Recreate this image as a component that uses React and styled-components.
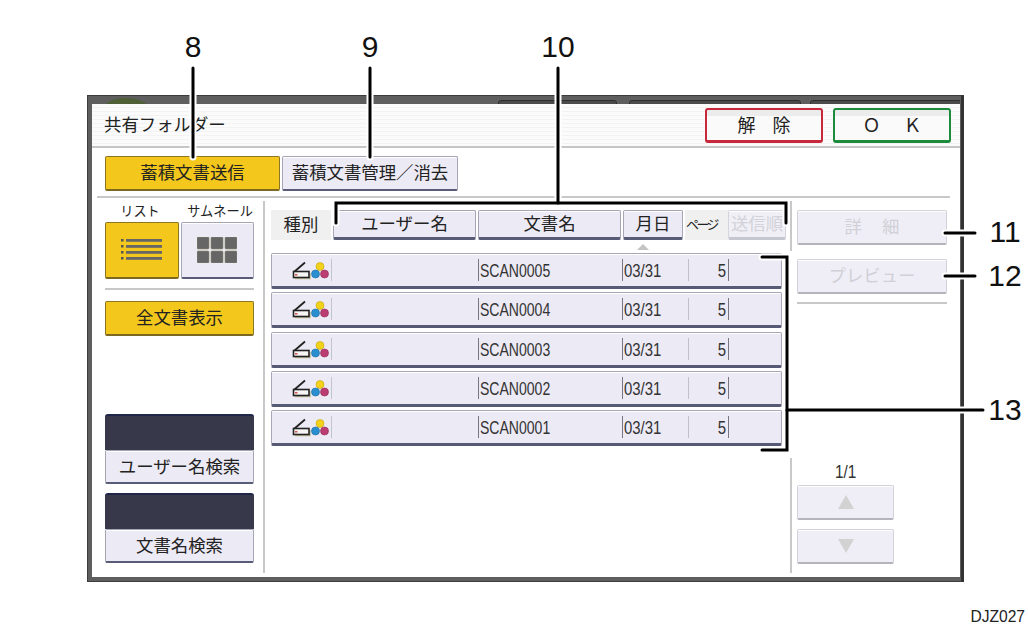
import React from "react";
import styled, { createGlobalStyle, css } from "styled-components";

const Global = createGlobalStyle`
  html, body { margin: 0; padding: 0; background: #fff; }
  body { font-family: "Noto Sans CJK JP", "Liberation Sans", sans-serif; color: #222; }
  #root { width: 1028px; height: 629px; overflow: hidden; }
`;

const Page = styled.div`
  position: relative;
  width: 1028px;
  height: 629px;
  padding: 95px 64px 0 87px;
  box-sizing: border-box;
`;

const Frame = styled.div`
  width: 877px;
  height: 487px;
  box-sizing: border-box;
  background: #5e5e5e;
  border: 1px solid #3c3c3c;
  border-right: 3px solid #333;
  padding: 0 1px 4px 4px;
  display: flex;
  flex-direction: column;
`;

const Strip = styled.div`
  height: 8px;
  display: flex;
  overflow: hidden;
  position: relative;
  flex: none;
`;

const Orb = styled.div`
  width: 44px;
  height: 20px;
  margin: 2px 0 0 12px;
  border-radius: 50%;
  background: #4f5f36;
  flex: none;
`;

const StripTab = styled.div`
  width: ${(p) => p.$w}px;
  margin-left: ${(p) => p.$m}px;
  margin-top: 4px;
  height: 10px;
  flex: none;
  background: #4a4a4a;
  border: 1px solid #2e2e2e;
  border-radius: 3px 3px 0 0;
`;

const Panel = styled.div`
  flex: 1;
  background: #fff;
  border-radius: 4px 0 0 0;
  display: flex;
  flex-direction: column;
  min-height: 0;
`;

const TitleBar = styled.div`
  height: 44px;
  flex: none;
  box-sizing: border-box;
  display: flex;
  align-items: center;
  gap: 10px;
  padding: 0 9px 0 12px;
  background: repeating-linear-gradient(#fbfbfb 0 3px, #f3f3f3 3px 4px);
  border-bottom: 2px solid #c6c6c6;
`;

const Title = styled.div`
  flex: 1;
  font-size: 17.4px;
  line-height: 24px;
  margin-top: -2px;
`;

const ConfirmButton = styled.div`
  width: 118px;
  height: 35px;
  box-sizing: border-box;
  display: flex;
  align-items: center;
  justify-content: center;
  gap: ${(p) => p.$gap}px;
  font-size: 18px;
  padding-bottom: 1px;
  background: linear-gradient(#ececec 0 20%, #fafafa 20% 100%);
  border: 2px solid ${(p) => p.$tone};
  border-bottom-width: 3px;
  border-radius: 3px;
`;

const buttonBase = css`
  box-sizing: border-box;
  display: flex;
  align-items: center;
  justify-content: center;
  padding-bottom: 3px;
  border-radius: 2px;
  background: ${(p) => (p.$on ? "#f3c71b" : "#eceaf5")};
  border: 1px solid ${(p) => (p.$on ? "#8c7624" : "#a5a5b6")};
  border-bottom: 2px solid ${(p) => (p.$on ? "#7c6820" : "#595c77")};
  box-shadow: inset 0 1px 0 ${(p) => (p.$on ? "#f3c71b" : "#fff")};
`;

const TabRow = styled.div`
  display: flex;
  gap: 2px;
  margin-top: 8px;
  padding-left: 13px;
  flex: none;
`;

const TabButton = styled.div`
  ${buttonBase};
  width: ${(p) => p.$w}px;
  height: 35px;
  font-size: 17.4px;
`;

const HRule = styled.div`
  height: 2px;
  background: #c8c8c8;
  margin: ${(p) => p.$m || "0"};
  flex: none;
`;

const Body = styled.div`
  flex: 1;
  display: flex;
  min-height: 0;
`;

const LeftCol = styled.div`
  width: 149px;
  margin-left: 13px;
  flex: none;
  display: flex;
  flex-direction: column;
`;

const ViewLabels = styled.div`
  display: grid;
  grid-template-columns: 70px 90px;
  margin-top: 5px;
  height: 19px;
  font-size: 13.2px;
  line-height: 16px;
  text-align: center;
`;

const ViewButtons = styled.div`
  display: flex;
  gap: 2px;
`;

const ViewButton = styled.div`
  ${buttonBase};
  width: 74px;
  height: 57px;
  padding-bottom: 0;
`;

const ShowAll = styled.div`
  ${buttonBase};
  height: 35px;
  font-size: 17.4px;
  margin-top: 11px;
`;

const SearchGroup = styled.div`
  display: flex;
  flex-direction: column;
  margin-top: ${(p) => p.$m}px;
`;

const SearchField = styled.div`
  height: 36px;
  box-sizing: border-box;
  background: #373849;
  border-top: 2px solid #20264a;
  border-radius: 3px 3px 0 0;
`;

const SearchButton = styled.div`
  ${buttonBase};
  height: 34px;
  font-size: 17.4px;
`;

const VRule = styled.div`
  width: 2px;
  background: #c8c8c8;
  margin: ${(p) => p.$m};
  height: ${(p) => p.$h || "auto"};
  flex: none;
`;

const Center = styled.div`
  width: 514px;
  flex: none;
  margin-left: 6px;
  padding-top: 12px;
  box-sizing: border-box;
`;

const HeaderRow = styled.div`
  display: flex;
  height: 30px;
  gap: 2px;
`;

const HeadCell = styled.div`
  ${buttonBase};
  width: ${(p) => p.$w}px;
  height: 30px;
  font-size: 17.4px;
  flex: none;
  border-bottom-width: 3px;
`;

const HeadLabel = styled.div`
  width: ${(p) => p.$w}px;
  height: 30px;
  flex: none;
  box-sizing: border-box;
  padding: 0 ${(p) => p.$pr || 0}px 3px 0;
  background: #f0f0f0;
  display: flex;
  align-items: center;
  justify-content: center;
  font-size: ${(p) => p.$size}px;
  letter-spacing: ${(p) => p.$track || 0}px;
`;

const DisabledHead = styled(HeadCell)`
  color: #d2d2d8;
  background: #f0eff6;
  border-color: #d4d4dc;
  border-bottom-color: #c6c6d0;
  margin-left: -2px;
`;

const SortMark = styled.div`
  width: 0;
  height: 0;
  margin: 4px 0 3px 366px;
  border-left: 6px solid transparent;
  border-right: 6px solid transparent;
  border-bottom: 6px solid #c4c4c4;
`;

const List = styled.div`
  display: flex;
  flex-direction: column;
  gap: 3.25px;
  width: 511px;
`;

const Row = styled.div`
  height: 36px;
  box-sizing: border-box;
  display: grid;
  grid-template-columns: 60px 146px 144px 66px 41px 1fr;
  align-items: center;
  background: #eceaf5;
  border: 1px solid #a7a7b7;
  border-bottom: 3px solid #565a74;
  border-radius: 2px;
  box-shadow: inset 0 1px 0 #fff;
`;

const IconCell = styled.div`
  height: 22px;
  display: flex;
  align-items: center;
  padding-left: 20px;
  box-sizing: border-box;
  border-right: 1px solid #c4c4cc;
`;

const Cell = styled.div`
  height: 22px;
  line-height: 24px;
  box-sizing: border-box;
  border-left: 1px solid ${(p) => (p.$soft ? "#c0c0c8" : "#77777f")};
  padding-left: 1px;
  font-family: "Liberation Sans", sans-serif;
  font-size: 18px;
  color: #333;
  white-space: nowrap;
`;

const Narrow = styled.span`
  display: inline-block;
  transform: scaleX(${(p) => p.$sx});
  transform-origin: ${(p) => p.$origin || "left"} center;
`;

const PageCount = styled(Cell)`
  text-align: right;
  padding-right: 2px;
  border-right: 1px solid #77777f;
`;

const RightCol = styled.div`
  flex: 1;
  display: flex;
  margin-left: 5px;
  min-width: 0;
`;

const Rules = styled.div`
  width: 2px;
  display: flex;
  flex-direction: column;
  justify-content: space-between;
  flex: none;
`;

const RightContent = styled.div`
  width: 150px;
  margin-left: 5px;
  display: flex;
  flex-direction: column;
`;

const ActionButton = styled.div`
  ${buttonBase};
  height: 35px;
  margin-top: ${(p) => p.$m}px;
  font-size: 17.4px;
  gap: ${(p) => p.$gap || 0}px;
  color: #d0d0d6;
  background: #efeef6;
  border-color: #d2d2da;
  border-bottom-color: #b4b4bd;
`;

const Pager = styled.div`
  margin-top: auto;
  padding-bottom: 13px;
  width: 97px;
  display: flex;
  flex-direction: column;
`;

const PagerText = styled.div`
  text-align: center;
  font-family: "Liberation Sans", sans-serif;
  font-size: 18px;
  line-height: 20px;
  margin-bottom: 3px;
  color: #333;
`;

const PagerButton = styled(ActionButton)`
  width: 97px;
  padding-bottom: 0;
  margin-top: ${(p) => p.$m}px;
`;

const Overlay = styled.svg`
  position: absolute;
  left: 0;
  top: 0;
  width: 1028px;
  height: 629px;
  pointer-events: none;
`;

const Callout = styled.div`
  position: absolute;
  transform: translate(-50%, -50%);
  left: ${(p) => p.$x}px;
  top: ${(p) => p.$y}px;
  font-family: "Liberation Sans", sans-serif;
  font-size: 30px;
  line-height: 1;
  color: #111;
`;

const FigureCode = styled.div`
  position: absolute;
  right: 3px;
  top: 609px;
  font-family: "Liberation Sans", sans-serif;
  font-size: 15.6px;
  line-height: 16px;
  color: #222;
`;

const ScanIcon = () => (
  <svg width="38" height="20" viewBox="0 0 38 20" aria-hidden="true">
    <path d="M2 12 L13 2.5" stroke="#222" strokeWidth="1.8" fill="none" />
    <path d="M3 18.7 H18.2 V13" stroke="#c2c29a" strokeWidth="1.3" fill="none" />
    <rect x="1.5" y="11.5" width="15.5" height="6" fill="#f6f6f6" stroke="#222" strokeWidth="1.6" />
    <rect x="3" y="14" width="2.5" height="1.5" fill="#d9534f" />
    <circle cx="28" cy="6.5" r="4" fill="#f2d21b" stroke="#c5a410" strokeWidth=".6" />
    <circle cx="23.5" cy="14" r="4" fill="#2a8fd0" stroke="#1c68a0" strokeWidth=".6" />
    <circle cx="32.5" cy="14" r="4" fill="#bb3d72" stroke="#92265a" strokeWidth=".6" />
  </svg>
);

const ListIcon = () => (
  <svg width="42" height="24" viewBox="0 0 42 24" aria-hidden="true">
    {[1, 7, 13, 19].map((y) => (
      <g key={y}>
        <rect x="0" y={y} width="2.5" height="2.5" fill="#555" />
        <rect x="5" y={y} width="36" height="2.8" fill="#666" />
      </g>
    ))}
  </svg>
);

const GridIcon = () => (
  <svg width="40" height="26" viewBox="0 0 40 26" aria-hidden="true">
    {[0, 14].map((y) =>
      [0, 14, 28].map((x) => (
        <rect key={`${x}-${y}`} x={x} y={y} width="12" height="12" rx="1" fill="#666" stroke="#8b8b6a" strokeWidth=".6" />
      ))
    )}
  </svg>
);

const Triangle = ({ up }) => (
  <svg width="16" height="14" viewBox="0 0 16 14" aria-hidden="true">
    <path d={up ? "M8 0 L16 14 H0 Z" : "M0 0 H16 L8 14 Z"} fill="#d2d2d2" />
  </svg>
);

const leaders = [
  "M193 68 V157",
  "M370 68 V157",
  "M558 68 V203",
  "M336 223 V203 H786 V223",
  "M945 233 H975",
  "M945 276 H975",
  "M762 257 H787 V450 H762",
  "M787 410 H983",
];

const docs = ["SCAN0005", "SCAN0004", "SCAN0003", "SCAN0002", "SCAN0001"];

export default function App() {
  return (
    <Page>
      <Global />
      <Frame>
        <Strip>
          <Orb />
          <StripTab $w={117} $m={350} />
          <StripTab $w={170} $m={12} />
          <StripTab $w={150} $m={9} />
        </Strip>
        <Panel>
          <TitleBar>
            <Title>共有フォルダー</Title>
            <ConfirmButton $tone="#c8283c" $gap={17}>
              <span>解</span>
              <span>除</span>
            </ConfirmButton>
            <ConfirmButton $tone="#1d8a3c" $gap={23}>
              <span>Ｏ</span>
              <span>Ｋ</span>
            </ConfirmButton>
          </TitleBar>
          <TabRow>
            <TabButton $on $w={175}>蓄積文書送信</TabButton>
            <TabButton $w={176}>蓄積文書管理／消去</TabButton>
          </TabRow>
          <HRule $m="5px 10px 0 5px" />
          <Body>
            <LeftCol>
              <ViewLabels>
                <span>リスト</span>
                <span>サムネール</span>
              </ViewLabels>
              <ViewButtons>
                <ViewButton $on>
                  <ListIcon />
                </ViewButton>
                <ViewButton>
                  <GridIcon />
                </ViewButton>
              </ViewButtons>
              <HRule $m="9px 0 0" />
              <ShowAll $on>全文書表示</ShowAll>
              <SearchGroup $m={78}>
                <SearchField />
                <SearchButton>ユーザー名検索</SearchButton>
              </SearchGroup>
              <SearchGroup $m={9}>
                <SearchField />
                <SearchButton>文書名検索</SearchButton>
              </SearchGroup>
            </LeftCol>
            <VRule $m="3px 0 4px 9px" />
            <Center>
              <HeaderRow>
                <HeadLabel $w={60} $size={17.4}>種別</HeadLabel>
                <HeadCell $w={143}>ユーザー名</HeadCell>
                <HeadCell $w={143}>文書名</HeadCell>
                <HeadCell $w={60}>月日</HeadCell>
                <HeadLabel $w={43} $size={13} $track={-2.5} $pr={10}>ページ</HeadLabel>
                <DisabledHead $w={58}>送信順</DisabledHead>
              </HeaderRow>
              <SortMark />
              <List>
                {docs.map((name) => (
                  <Row key={name}>
                    <IconCell>
                      <ScanIcon />
                    </IconCell>
                    <div />
                    <Cell><Narrow $sx={0.78}>{name}</Narrow></Cell>
                    <Cell><Narrow $sx={0.83}>03/31</Narrow></Cell>
                    <PageCount $soft><Narrow $sx={0.83} $origin="right">5</Narrow></PageCount>
                    <div />
                  </Row>
                ))}
              </List>
            </Center>
            <RightCol>
              <Rules>
                <VRule $m="3px 0 0" $h="50px" />
                <VRule $m="0 0 4px" $h="115px" />
              </Rules>
              <RightContent>
                <ActionButton $m={12} $gap={20}>
                  <span>詳</span>
                  <span>細</span>
                </ActionButton>
                <ActionButton $m={14}>プレビュー</ActionButton>
                <HRule $m="8px 0 0" />
                <Pager>
                  <PagerText><Narrow $sx={0.85} $origin="center">1/1</Narrow></PagerText>
                  <PagerButton $m={0}>
                    <Triangle up />
                  </PagerButton>
                  <PagerButton $m={9}>
                    <Triangle />
                  </PagerButton>
                </Pager>
              </RightContent>
            </RightCol>
          </Body>
        </Panel>
      </Frame>
      <Overlay viewBox="0 0 1028 629" aria-hidden="true">
        {leaders.map((d) => (
          <path key={`h${d}`} d={d} fill="none" stroke="#fff" strokeWidth="7" strokeLinecap="round" />
        ))}
        {leaders.map((d) => (
          <path key={d} d={d} fill="none" stroke="#000" strokeWidth="3" strokeLinecap="round" />
        ))}
      </Overlay>
      <Callout $x={193} $y={47}>8</Callout>
      <Callout $x={370} $y={47}>9</Callout>
      <Callout $x={558} $y={47}>10</Callout>
      <Callout $x={1005} $y={232}>11</Callout>
      <Callout $x={1005} $y={276}>12</Callout>
      <Callout $x={1005} $y={410}>13</Callout>
      <FigureCode>DJZ027</FigureCode>
    </Page>
  );
}
